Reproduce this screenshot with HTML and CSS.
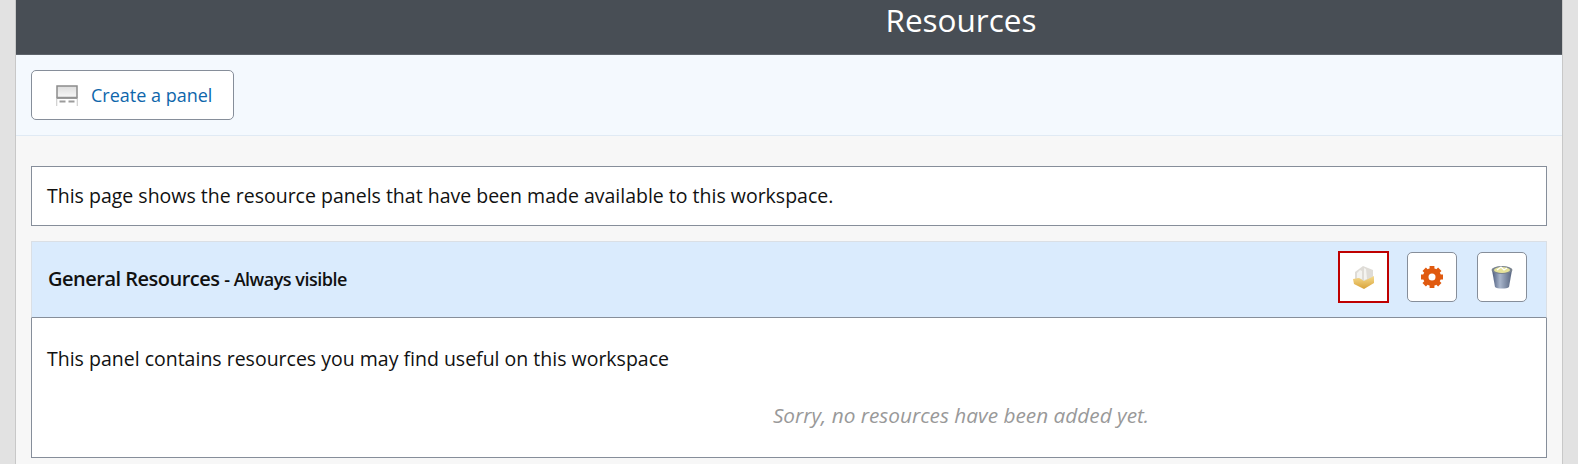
FILE: index.html
```html
<!DOCTYPE html>
<html lang="en">
<head>
<meta charset="utf-8">
<title>Resources</title>
<link rel="stylesheet" href="styles.css">
</head>
<body>
<main class="page">
  <header class="topbar"><h1 class="title">Resources</h1></header>
  <div class="toolbar">
    <a class="create-btn" href="#">
      <svg class="create-icon" width="22" height="21" viewBox="0 0 22 21">
        <defs><linearGradient id="scr" x1="0" y1="0" x2="0" y2="1"><stop offset="0" stop-color="#dcdcdc"/><stop offset="1" stop-color="#f8f8f8"/></linearGradient></defs>
        <rect x="1" y="1" width="20" height="11.500" fill="url(#scr)" stroke="#8c8c8c" stroke-width="1.500"/>
        <rect x="0.500" y="12.500" width="21" height="1.500" fill="#9a9a9a"/>
        <path d="M0.700 14v7M21.300 14v7" stroke="#cfcfcf" stroke-width="1.200"/>
        <path d="M3.500 16.500h6M12.500 16.500h6" stroke="#9c9c9c" stroke-width="2"/>
      </svg>
      <span>Create a panel</span>
    </a>
  </div>
  <div class="content">
    <p class="intro">This page shows the resource panels that have been made available to this workspace.</p>
    <section class="panel">
      <div class="panel-head">
        <h2 class="panel-title">General Resources <small class="panel-note">- Always visible</small></h2>
        <div class="actions">
          <button class="icon-btn focused" aria-label="Add resource">
            <svg class="icon" width="24" height="24" viewBox="0 0 24 24">
              <defs><linearGradient id="tray" x1="0" y1="0" x2="0" y2="1"><stop offset="0" stop-color="#f6dc90"/><stop offset="1" stop-color="#d8a238"/></linearGradient></defs>
              <path d="M3 14V7l8-6 10 4v9l-9 4z" fill="#dfdcd7"/>
              <path d="M5 8l3-3 2 1v8l-5-1zM12 3l2 1 1 10-3 1z" fill="#f4f3f0"/>
              <path d="M1 14l6-1 5 3 10-5v7l-10 6-10-5z" fill="url(#tray)"/>
            </svg>
          </button>
          <button class="icon-btn" aria-label="Settings">
            <svg class="icon" width="24" height="24" viewBox="0 0 24 24">
              <circle cx="12" cy="12" r="6.500" fill="none" stroke="#e05a10" stroke-width="5"/>
              <path d="M12 1v22M1 12h22M4.200 4.200l15.600 15.600M19.800 4.200L4.200 19.800" stroke="#e05a10" stroke-width="4.800"/>
              <circle cx="12" cy="12" r="3.500" fill="#fff"/>
            </svg>
          </button>
          <button class="icon-btn" aria-label="Delete">
            <svg class="icon" width="24" height="24" viewBox="0 0 24 24">
              <defs><linearGradient id="bin" x1="0" y1="0" x2="1" y2="0"><stop offset="0" stop-color="#4a5a7c"/><stop offset=".4" stop-color="#a8b5cb"/><stop offset="1" stop-color="#56647f"/></linearGradient></defs>
              <path d="M2 5l3 17c2 2 12 2 14 0l3-17z" fill="url(#bin)"/>
              <ellipse cx="12" cy="5" rx="10.500" ry="4" fill="#7a8490"/>
              <ellipse cx="12" cy="5" rx="8" ry="3" fill="#e6e39a"/>
              <path d="M7 5l4-3 3 3 3-2" stroke="#fff" stroke-width="1.300" fill="none"/>
            </svg>
          </button>
        </div>
      </div>
      <div class="panel-body">
        <p class="panel-desc">This panel contains resources you may find useful on this workspace</p>
        <p class="empty">Sorry, no resources have been added yet.</p>
      </div>
    </section>
  </div>
</main>
</body>
</html>
```
FILE: styles.css
```css
html, body { margin: 0; padding: 0; height: 464px; overflow: hidden; background: #e2e2e2; }
body { font-family: "Open Sans", sans-serif; font-size: 19.5px; color: #111; }
.page { margin: 0 15px; height: 464px; background: #f7f7f7; border-left: 1px solid #c8c8c8; border-right: 1px solid #c8c8c8; }
.topbar { height: 54px; background: #484e55; border-bottom: 1px solid #5e646b; text-align: center; }
.title { margin: 0; padding-left: 344px; font-size: 31.5px; font-weight: 400; line-height: 40px; color: #fff; }
.toolbar { height: 81px; box-sizing: border-box; padding: 15px; background: #f4f9fe; border-bottom: 1px solid #e0eaf4; }
.create-btn { display: inline-flex; align-items: center; gap: 13px; box-sizing: border-box; width: 203px; height: 50px; padding-left: 24px; background: #fff; border: 1px solid #868e9a; border-radius: 5px; color: #0e66ab; font-size: 18px; text-decoration: none; }
.create-icon { filter: blur(0.4px); }
.content { padding: 30px 15px 0; }
.intro { margin: 0 0 15px; box-sizing: border-box; height: 60px; padding: 0 15px; line-height: 58px; background: #fff; border: 1px solid #868e9a; }
.panel-head { display: flex; align-items: center; justify-content: space-between; box-sizing: border-box; height: 77px; padding: 0 19px 0 16px; background: #daebfd; border: 1px solid #dadfe5; border-bottom: 1px solid #868e9a; }
.panel-title { margin: 0 0 2px; font-size: 20px; font-weight: 600; letter-spacing: -0.5px; color: #111; }
.panel-note { font-size: 18px; font-weight: 600; }
.actions { display: flex; gap: 20px; margin-bottom: 5px; }
.icon-btn { display: flex; align-items: center; justify-content: center; width: 50px; height: 50px; padding: 0; background: #fff; border: 1px solid #868e9a; border-radius: 5px; }
.icon-btn.focused { width: 51px; height: 52px; margin: -1px -2px -1px 0; border: 2px solid #bf0000; border-radius: 0; }
.icon { filter: blur(0.6px); }
.panel-body { box-sizing: border-box; height: 140px; padding: 0 15px; background: #fff; border: 1px solid #868e9a; border-top: 0; }
.panel-desc { margin: 0; padding-top: 29px; line-height: 24px; }
.empty { margin: 32px 0 0; padding-left: 344px; text-align: center; font-size: 20.8px; font-style: italic; line-height: 24px; color: #999; }
```
